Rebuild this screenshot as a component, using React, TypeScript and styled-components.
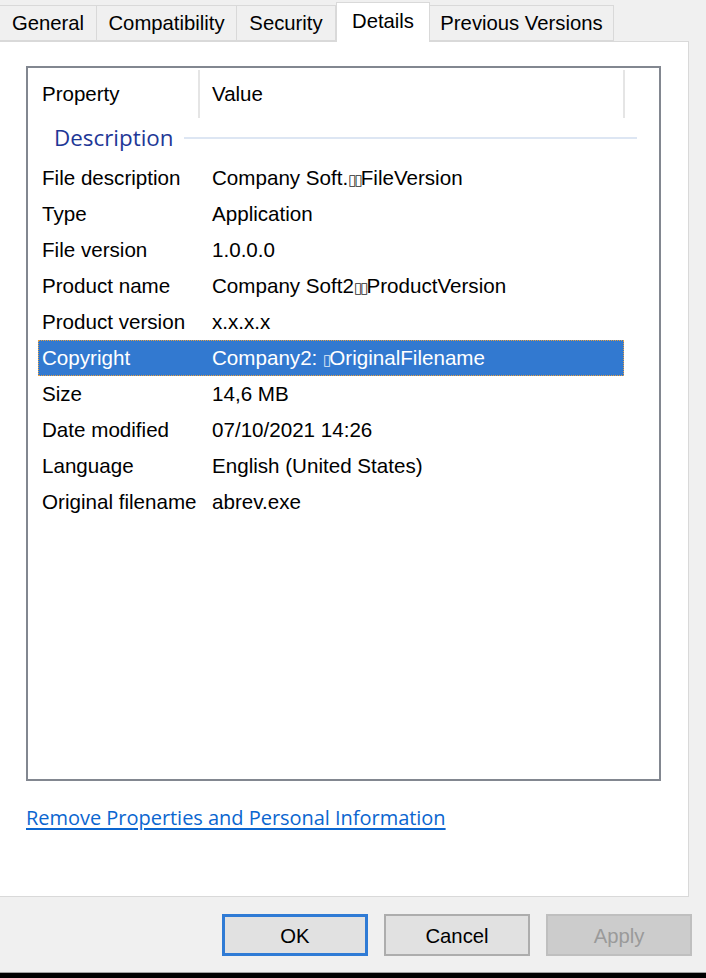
import React from "react";
import styled, { createGlobalStyle } from "styled-components";

const Global = createGlobalStyle`
  html, body { margin: 0; padding: 0; background: #f0f0f0; }
  body { font-family: "Liberation Sans", Arial, sans-serif; }
`;

const Window = styled.div`
  width: 706px;
  height: 978px;
  background: #f0f0f0;
  display: flex;
  flex-direction: column;
  overflow: hidden;
`;

const TabStrip = styled.div`
  height: 41px;
  display: flex;
  align-items: flex-end;
  box-sizing: border-box;
`;

const Tab = styled.div<{ $active?: boolean; $w: number }>`
  box-sizing: border-box;
  width: ${(p) => p.$w}px;
  height: ${(p) => (p.$active ? 40 : 36)}px;
  margin-bottom: ${(p) => (p.$active ? -1 : 0)}px;
  background: ${(p) => (p.$active ? "#ffffff" : "#f0f0f0")};
  border: 1px solid #d9d9d9;
  border-bottom: ${(p) => (p.$active ? "none" : "1px solid #d9d9d9")};
  border-left: ${(p) => (p.$active ? "1px solid #d9d9d9" : "none")};
  display: flex;
  align-items: ${(p) => (p.$active ? "flex-start" : "center")};
  justify-content: center;
  padding-top: ${(p) => (p.$active ? 7 : 1)}px;
  font-size: 20.3px;
  color: #000;
  position: relative;
  z-index: ${(p) => (p.$active ? 2 : 1)};
  &:first-child { border-left: none; }
`;

const Panel = styled.div`
  width: 689px;
  height: 856px;
  box-sizing: border-box;
  background: #ffffff;
  border-top: 1px solid #d9d9d9;
  border-right: 1px solid #d9d9d9;
  border-bottom: 1px solid #d9d9d9;
  padding: 24px 0 0 26px;
  display: flex;
  flex-direction: column;
`;

const ListBox = styled.div`
  width: 635px;
  height: 715px;
  box-sizing: border-box;
  border: 2px solid #828790;
  background: #fff;
  display: flex;
  flex-direction: column;
`;

const HeaderRow = styled.div`
  height: 50px;
  display: flex;
  align-items: stretch;
  padding-top: 2px;
  box-sizing: border-box;
`;

const HeaderCell = styled.div<{ $w: number; $pad: number }>`
  width: ${(p) => p.$w}px;
  box-sizing: border-box;
  padding-left: ${(p) => p.$pad}px;
  display: flex;
  align-items: center;
  font-size: 20.5px;
  color: #000;
  border-right: 2px solid #e5e5e5;
`;

const GroupHeader = styled.div`
  height: 42px;
  display: flex;
  align-items: center;
  padding-left: 26px;
  padding-right: 22px;
  padding-bottom: 4px;
  box-sizing: border-box;
  gap: 10px;
`;

const GroupTitle = styled.span`
  font-family: "Open Sans", "Noto Sans", sans-serif;
  font-size: 22.4px;
  color: #1e3796;
`;

const GroupLine = styled.div`
  flex: 1;
  height: 2px;
  background: #dde6f3;
  margin-top: 1px;
`;

const Rows = styled.div`
  display: flex;
  flex-direction: column;
  padding-left: 10px;
`;

const Row = styled.div<{ $selected?: boolean }>`
  width: 586px;
  height: 36px;
  box-sizing: border-box;
  display: flex;
  align-items: center;
  font-size: 20.6px;
  color: ${(p) => (p.$selected ? "#ffffff" : "#000000")};
  background: ${(p) => (p.$selected ? "#3279d0" : "transparent")};
  outline: ${(p) => (p.$selected ? "1px dotted #e8a040" : "none")};
  outline-offset: -1px;
`;

const PropCell = styled.div`
  width: 174px;
  padding-left: 4px;
  box-sizing: border-box;
  white-space: nowrap;
`;

const ValueCell = styled.div`
  white-space: nowrap;
`;

const Tofu = styled.span`
  font-family: "DejaVu Sans", sans-serif;
  font-size: 15px;
  letter-spacing: -2px;
  opacity: 0.85;
`;

const Link = styled.a`
  margin-top: 23px;
  align-self: flex-start;
  font-family: "Open Sans", "Noto Sans", sans-serif;
  font-size: 20px;
  letter-spacing: -0.03px;
  color: #0b66d0;
  text-decoration: underline;
  text-underline-offset: 3px;
  cursor: pointer;
`;

const ButtonBar = styled.div`
  height: 75px;
  display: flex;
  align-items: flex-start;
  padding: 17px 14px 0 222px;
  box-sizing: border-box;
  gap: 16px;
`;

const Button = styled.button<{ $variant?: "default" | "disabled" }>`
  width: 146px;
  height: 42px;
  box-sizing: border-box;
  font-family: "Liberation Sans", Arial, sans-serif;
  font-size: 20.3px;
  padding: 0;
  padding-top: 3px;
  background: ${(p) => (p.$variant === "disabled" ? "#cccccc" : "#e1e1e1")};
  color: ${(p) => (p.$variant === "disabled" ? "#9a9a9a" : "#000")};
  border: ${(p) =>
    p.$variant === "default"
      ? "3px solid #2f7bd5"
      : p.$variant === "disabled"
      ? "2px solid #bfbfbf"
      : "2px solid #adadad"};
`;

const BottomEdge = styled.div`
  height: 6px;
  flex-shrink: 0;
  background: #000;
  border-top: 1px solid #a0a0a0;
  box-sizing: border-box;
  margin-top: auto;
`;

const tabs: [string, number][] = [
  ["General", 97],
  ["Compatibility", 140],
  ["Security", 99],
  ["Details", 94],
  ["Previous Versions", 184],
];

type RowData = { p: string; v: React.ReactNode; sel?: boolean };

const rows: RowData[] = [
  { p: "File description", v: <>Company Soft.<Tofu>▯▯</Tofu>FileVersion</> },
  { p: "Type", v: "Application" },
  { p: "File version", v: "1.0.0.0" },
  { p: "Product name", v: <>Company Soft2<Tofu>▯▯</Tofu>ProductVersion</> },
  { p: "Product version", v: "x.x.x.x" },
  { p: "Copyright", v: <>Company2: <Tofu>▯</Tofu>OriginalFilename</>, sel: true },
  { p: "Size", v: "14,6 MB" },
  { p: "Date modified", v: "07/10/2021 14:26" },
  { p: "Language", v: "English (United States)" },
  { p: "Original filename", v: "abrev.exe" },
];

export default function App() {
  return (
    <Window>
      <Global />
      <TabStrip>
        {tabs.map(([t, w]) => (
          <Tab key={t} $w={w} $active={t === "Details"}>
            {t}
          </Tab>
        ))}
      </TabStrip>
      <Panel>
        <ListBox>
          <HeaderRow>
            <HeaderCell $w={172} $pad={14}>Property</HeaderCell>
            <HeaderCell $w={425} $pad={12}>Value</HeaderCell>
          </HeaderRow>
          <GroupHeader>
            <GroupTitle>Description</GroupTitle>
            <GroupLine />
          </GroupHeader>
          <Rows>
            {rows.map((r) => (
              <Row key={r.p} $selected={r.sel}>
                <PropCell>{r.p}</PropCell>
                <ValueCell>{r.v}</ValueCell>
              </Row>
            ))}
          </Rows>
        </ListBox>
        <Link>Remove Properties and Personal Information</Link>
      </Panel>
      <ButtonBar>
        <Button $variant="default">OK</Button>
        <Button>Cancel</Button>
        <Button $variant="disabled">Apply</Button>
      </ButtonBar>
      <BottomEdge />
    </Window>
  );
}
